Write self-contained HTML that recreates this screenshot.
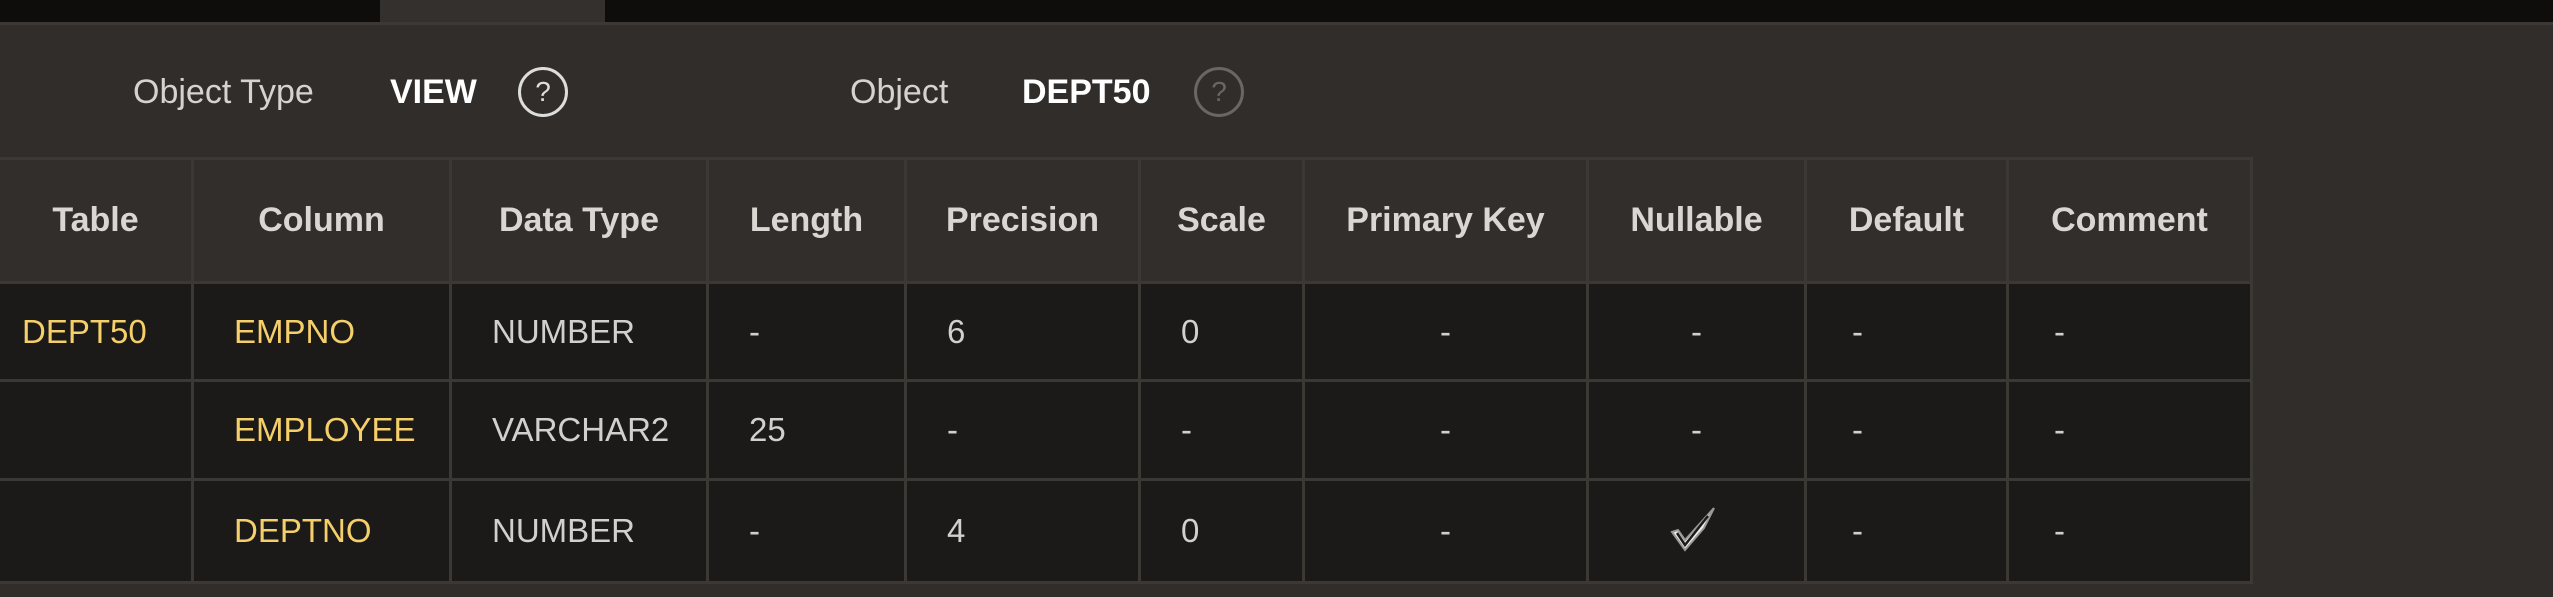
<!DOCTYPE html>
<html><head><meta charset="utf-8"><style>
html,body{margin:0;padding:0;width:2553px;height:597px;overflow:hidden;background:#312d2a;font-family:"Liberation Sans",sans-serif;}
.top{position:absolute;left:0;top:0;width:2553px;height:22px;background:#0e0d0c;}
.tab{position:absolute;left:380px;top:0;width:225px;height:22px;background:#33302d;}
.tline{position:absolute;left:0;top:22px;width:2553px;height:3px;background:#3c3935;}
.lbl{position:absolute;top:71px;font-size:34px;color:#d6d3cf;line-height:42px;}
.val{position:absolute;top:71px;font-size:34px;color:#fff;font-weight:bold;line-height:42px;}
.help{position:absolute;top:67px;width:44px;height:44px;border:3px solid #ddd;border-radius:50%;color:#ddd;font-size:28px;text-align:center;line-height:44px;}
.grid{position:absolute;left:0;top:157px;display:grid;grid-template-columns:191px 255px 254px 195px 231px 161px 281px 215px 199px 241px;grid-template-rows:121px 95px 96px 100px;gap:3px;padding:3px 3px 3px 0;background:#3c3935;}
.grid div{background:#1b1a18;color:#d2d0cd;font-size:33px;display:flex;align-items:center;padding-left:40px;}
.grid .h{background:#312e2b;color:#dad7d3;font-weight:bold;font-size:34px;justify-content:center;padding:0;}
.grid .y{color:#f5cf6a;}
.grid .c{justify-content:center;padding:0;}
.grid .d{padding-left:45px;}
</style></head><body>
<div class="top"></div><div class="tab"></div><div class="tline"></div>
<div class="lbl" style="left:133px">Object Type</div>
<div class="val" style="left:390px">VIEW</div>
<div class="help" style="left:518px">?</div>
<div class="lbl" style="left:850px">Object</div>
<div class="val" style="left:1022px">DEPT50</div>
<div class="help" style="left:1194px;border-color:#6a6762;color:#6a6762">?</div>
<div class="grid">
<div class="h">Table</div><div class="h">Column</div><div class="h">Data Type</div><div class="h">Length</div><div class="h">Precision</div><div class="h">Scale</div><div class="h">Primary Key</div><div class="h">Nullable</div><div class="h">Default</div><div class="h">Comment</div>
<div class="y" style="padding-left:22px">DEPT50</div><div class="y">EMPNO</div><div>NUMBER</div><div>-</div><div>6</div><div>0</div><div class="c">-</div><div class="c">-</div><div class="d">-</div><div class="d">-</div>
<div></div><div class="y">EMPLOYEE</div><div>VARCHAR2</div><div>25</div><div>-</div><div>-</div><div class="c">-</div><div class="c">-</div><div class="d">-</div><div class="d">-</div>
<div></div><div class="y">DEPTNO</div><div>NUMBER</div><div>-</div><div>4</div><div>0</div><div class="c">-</div><div class="c"><svg width="50" height="46" viewBox="0 0 50 46" style="margin-left:-4px;margin-top:-4px"><path d="M2 26 L8 24 L15 34 L44 2 L34 22 L15 44 Z" fill="#eee" stroke="#999" stroke-width="2"/><path d="M7 27 L15 39 L38 10" fill="none" stroke="#1b1a18" stroke-width="2.5"/></svg></div><div class="d">-</div><div class="d">-</div>
</div>
</body></html>
